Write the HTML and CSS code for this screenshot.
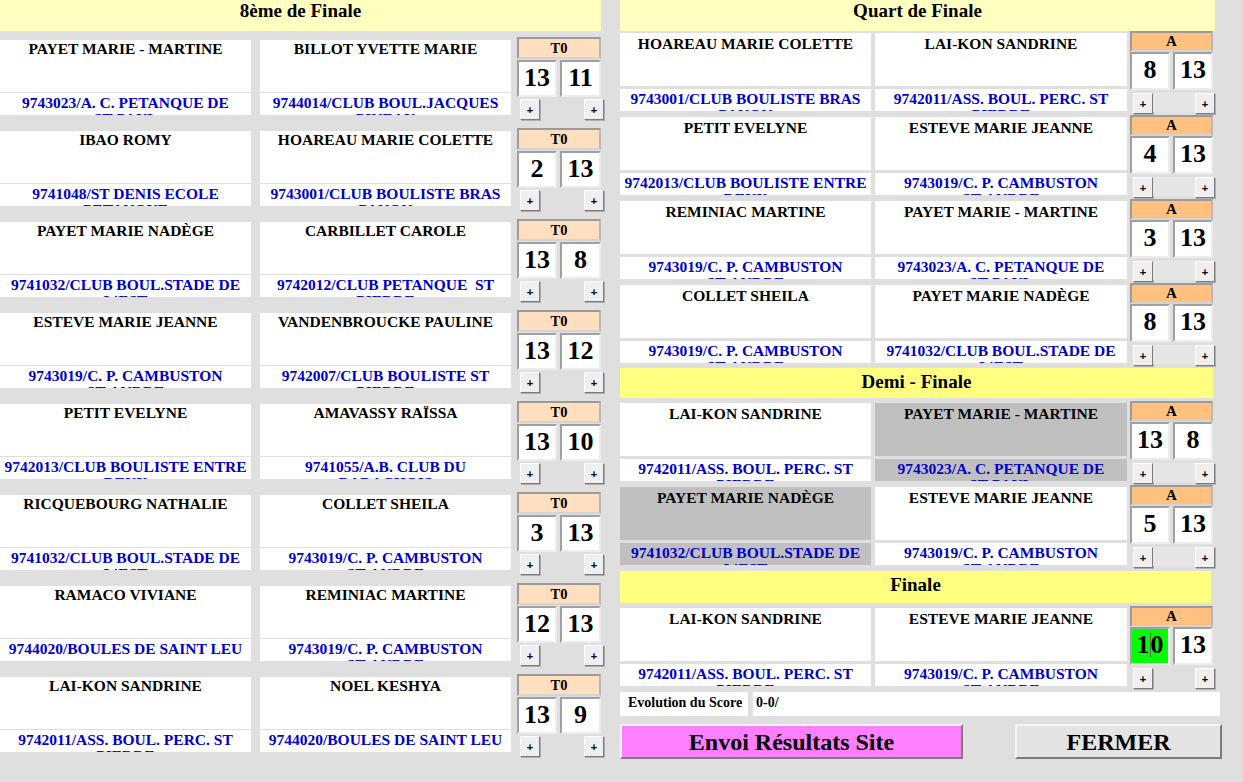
FILE: index.html
```html
<!DOCTYPE html>
<html lang="fr">
<head>
<meta charset="utf-8">
<title>Tableau</title>
<link rel="stylesheet" href="styles.css">
</head>
<body>
<div class="page">
  <div class="col-left">
    <div class="head head-8">8ème de Finale</div>

    <div class="match">
      <div class="player p1"><div class="name">PAYET MARIE - MARTINE</div><div class="club">9743023/A. C. PETANQUE DE ST&nbsp;PAUL</div></div>
      <div class="player p2"><div class="name">BILLOT YVETTE MARIE</div><div class="club">9744014/CLUB BOUL.JACQUES PINEAU</div></div>
      <div class="score"><div class="round">T0</div><div class="cells"><div class="cell">13</div><div class="cell c2">11</div></div><div class="btns"><button class="plus">+</button><button class="plus">+</button></div></div>
    </div>

    <div class="match">
      <div class="player p1"><div class="name">IBAO ROMY</div><div class="club">9741048/ST DENIS ECOLE PETANQUE</div></div>
      <div class="player p2"><div class="name">HOAREAU MARIE COLETTE</div><div class="club">9743001/CLUB BOULISTE BRAS PANON</div></div>
      <div class="score"><div class="round">T0</div><div class="cells"><div class="cell">2</div><div class="cell c2">13</div></div><div class="btns"><button class="plus">+</button><button class="plus">+</button></div></div>
    </div>

    <div class="match">
      <div class="player p1"><div class="name">PAYET MARIE NADÈGE</div><div class="club">9741032/CLUB BOUL.STADE DE L'EST</div></div>
      <div class="player p2"><div class="name">CARBILLET CAROLE</div><div class="club">9742012/CLUB PETANQUE &nbsp;ST PIERRE</div></div>
      <div class="score"><div class="round">T0</div><div class="cells"><div class="cell">13</div><div class="cell c2">8</div></div><div class="btns"><button class="plus">+</button><button class="plus">+</button></div></div>
    </div>

    <div class="match">
      <div class="player p1"><div class="name">ESTEVE MARIE JEANNE</div><div class="club">9743019/C. P. CAMBUSTON ST&nbsp;ANDRE</div></div>
      <div class="player p2"><div class="name">VANDENBROUCKE PAULINE</div><div class="club">9742007/CLUB BOULISTE ST PIERRE</div></div>
      <div class="score"><div class="round">T0</div><div class="cells"><div class="cell">13</div><div class="cell c2">12</div></div><div class="btns"><button class="plus">+</button><button class="plus">+</button></div></div>
    </div>

    <div class="match">
      <div class="player p1"><div class="name">PETIT EVELYNE</div><div class="club">9742013/CLUB BOULISTE ENTRE DEUX</div></div>
      <div class="player p2"><div class="name">AMAVASSY RAÏSSA</div><div class="club">9741055/A.B. CLUB DU BARACHOIS</div></div>
      <div class="score"><div class="round">T0</div><div class="cells"><div class="cell">13</div><div class="cell c2">10</div></div><div class="btns"><button class="plus">+</button><button class="plus">+</button></div></div>
    </div>

    <div class="match">
      <div class="player p1"><div class="name">RICQUEBOURG NATHALIE</div><div class="club">9741032/CLUB BOUL.STADE DE L'EST</div></div>
      <div class="player p2"><div class="name">COLLET SHEILA</div><div class="club">9743019/C. P. CAMBUSTON ST&nbsp;ANDRE</div></div>
      <div class="score"><div class="round">T0</div><div class="cells"><div class="cell">3</div><div class="cell c2">13</div></div><div class="btns"><button class="plus">+</button><button class="plus">+</button></div></div>
    </div>

    <div class="match">
      <div class="player p1"><div class="name">RAMACO VIVIANE</div><div class="club">9744020/BOULES DE SAINT LEU</div></div>
      <div class="player p2"><div class="name">REMINIAC MARTINE</div><div class="club">9743019/C. P. CAMBUSTON ST&nbsp;ANDRE</div></div>
      <div class="score"><div class="round">T0</div><div class="cells"><div class="cell">12</div><div class="cell c2">13</div></div><div class="btns"><button class="plus">+</button><button class="plus">+</button></div></div>
    </div>

    <div class="match">
      <div class="player p1"><div class="name">LAI-KON SANDRINE</div><div class="club">9742011/ASS. BOUL. PERC. ST PIERRE</div></div>
      <div class="player p2"><div class="name">NOEL KESHYA</div><div class="club">9744020/BOULES DE SAINT LEU</div></div>
      <div class="score"><div class="round">T0</div><div class="cells"><div class="cell">13</div><div class="cell c2">9</div></div><div class="btns"><button class="plus">+</button><button class="plus">+</button></div></div>
    </div>
  </div>

  <div class="col-right">
    <div class="head head-q">Quart de Finale</div>

    <div class="match">
      <div class="player p1"><div class="name">HOAREAU MARIE COLETTE</div><div class="club">9743001/CLUB BOULISTE BRAS PANON</div></div>
      <div class="player p2"><div class="name">LAI-KON SANDRINE</div><div class="club">9742011/ASS. BOUL. PERC. ST PIERRE</div></div>
      <div class="score"><div class="round">A</div><div class="cells"><div class="cell">8</div><div class="cell c2">13</div></div><div class="btns"><button class="plus">+</button><span class="strip"></span><button class="plus">+</button></div></div>
    </div>

    <div class="match">
      <div class="player p1"><div class="name">PETIT EVELYNE</div><div class="club">9742013/CLUB BOULISTE ENTRE DEUX</div></div>
      <div class="player p2"><div class="name">ESTEVE MARIE JEANNE</div><div class="club">9743019/C. P. CAMBUSTON ST&nbsp;ANDRE</div></div>
      <div class="score"><div class="round">A</div><div class="cells"><div class="cell">4</div><div class="cell c2">13</div></div><div class="btns"><button class="plus">+</button><span class="strip"></span><button class="plus">+</button></div></div>
    </div>

    <div class="match">
      <div class="player p1"><div class="name">REMINIAC MARTINE</div><div class="club">9743019/C. P. CAMBUSTON ST&nbsp;ANDRE</div></div>
      <div class="player p2"><div class="name">PAYET MARIE - MARTINE</div><div class="club">9743023/A. C. PETANQUE DE ST&nbsp;PAUL</div></div>
      <div class="score"><div class="round">A</div><div class="cells"><div class="cell">3</div><div class="cell c2">13</div></div><div class="btns"><button class="plus">+</button><span class="strip"></span><button class="plus">+</button></div></div>
    </div>

    <div class="match">
      <div class="player p1"><div class="name">COLLET SHEILA</div><div class="club">9743019/C. P. CAMBUSTON ST&nbsp;ANDRE</div></div>
      <div class="player p2"><div class="name">PAYET MARIE NADÈGE</div><div class="club">9741032/CLUB BOUL.STADE DE L'EST</div></div>
      <div class="score"><div class="round">A</div><div class="cells"><div class="cell">8</div><div class="cell c2">13</div></div><div class="btns"><button class="plus">+</button><span class="strip"></span><button class="plus">+</button></div></div>
    </div>

    <div class="head head-d">Demi - Finale</div>

    <div class="match">
      <div class="player p1"><div class="name">LAI-KON SANDRINE</div><div class="club">9742011/ASS. BOUL. PERC. ST PIERRE</div></div>
      <div class="player p2 lost"><div class="name">PAYET MARIE - MARTINE</div><div class="club">9743023/A. C. PETANQUE DE ST&nbsp;PAUL</div></div>
      <div class="score"><div class="round">A</div><div class="cells"><div class="cell">13</div><div class="cell c2">8</div></div><div class="btns"><button class="plus">+</button><span class="strip"></span><button class="plus">+</button></div></div>
    </div>

    <div class="match">
      <div class="player p1 lost"><div class="name">PAYET MARIE NADÈGE</div><div class="club">9741032/CLUB BOUL.STADE DE L'EST</div></div>
      <div class="player p2"><div class="name">ESTEVE MARIE JEANNE</div><div class="club">9743019/C. P. CAMBUSTON ST&nbsp;ANDRE</div></div>
      <div class="score"><div class="round">A</div><div class="cells"><div class="cell">5</div><div class="cell c2">13</div></div><div class="btns"><button class="plus">+</button><span class="strip"></span><button class="plus">+</button></div></div>
    </div>

    <div class="head head-f">Finale</div>

    <div class="match final">
      <div class="player p1"><div class="name">LAI-KON SANDRINE</div><div class="club">9742011/ASS. BOUL. PERC. ST PIERRE</div></div>
      <div class="player p2"><div class="name">ESTEVE MARIE JEANNE</div><div class="club">9743019/C. P. CAMBUSTON ST&nbsp;ANDRE</div></div>
      <div class="score"><div class="round">A</div><div class="cells"><div class="cell green">1<span class="caret"></span>0</div><div class="cell c2">13</div></div><div class="btns"><button class="plus">+</button><button class="plus">+</button></div></div>
    </div>

    <div class="evo">
      <div class="evo-label">Evolution du Score</div>
      <div class="evo-value">0-0/</div>
    </div>

    <div class="actions">
      <button class="btn btn-send">Envoi Résultats Site</button>
      <button class="btn btn-close">FERMER</button>
    </div>
  </div>
</div>
</body>
</html>
```

FILE: styles.css
```css
html, body {
  margin: 0;
  padding: 0;
}
body {
  background: #dfdfdf;
  font-family: "Liberation Serif", "Times New Roman", serif;
  color: #000;
  width: 1243px;
  height: 782px;
  overflow: hidden;
}
.page {
  display: flex;
  align-items: flex-start;
}
.col-left {
  width: 604px;
}
.col-right {
  width: 604px;
  margin-left: 16px;
}

/* section headers */
.head {
  font-weight: bold;
  font-size: 19px;
  text-align: center;
  box-sizing: border-box;
}
.head-8 {
  width: 601px;
  height: 31px;
  line-height: 22px;
  background: #ffffc0;
  margin-bottom: 6px;
}
.head-q {
  width: 595px;
  height: 31px;
  line-height: 22px;
  background: #ffffc0;
  margin-bottom: 1px;
}
.head-d {
  width: 593px;
  height: 30px;
  line-height: 27px;
  background: #ffff80;
  margin-bottom: 4px;
}
.head-f {
  width: 591px;
  height: 32px;
  line-height: 27px;
  background: #ffff80;
  margin-top: 1px;
  margin-bottom: 4px;
}

/* match rows */
.match {
  display: flex;
  align-items: flex-start;
}
.col-left .match {
  height: 91px;
}
.col-right .match {
  height: 84px;
}
.player {
  width: 251px;
  display: flex;
  flex-direction: column;
}
.col-left .player {
  margin-top: 3px;
}
.col-left .p1 { margin-right: 9px; }
.col-left .p2 { margin-right: 6px; }
.col-right .player {
  margin-top: 1px;
}
.col-right .p1 { margin-right: 4px; }
.col-right .p2 { width: 252px; margin-right: 3px; }

.name, .club {
  background: #fff;
  text-align: center;
  font-weight: bold;
  font-size: 15.5px;
  line-height: 16px;
  box-sizing: border-box;
  overflow: hidden;
}
.name {
  height: 52px;
  padding-top: 1px;
}
.club {
  color: #0000cc;
  height: 22px;
  margin-top: 1px;
  padding-top: 1.5px;
  line-height: 16px;
}
.col-right .name {
  height: 53px;
  padding-top: 3px;
}
.col-right .club {
  height: 22px;
  margin-top: 3px;
  padding-top: 1.5px;
}
.lost .name, .lost .club {
  background: #c0c0c0;
}

/* score block */
.score {
  width: 87px;
}
.col-right .score {
  width: 85px;
}
.round {
  width: 84px;
  height: 22px;
  box-sizing: border-box;
  border: 2px solid;
  border-color: #9a9a9a #b8b8b8 #d4d4d4 #9a9a9a;
  background: #ffdfbf;
  font-weight: bold;
  font-size: 14.5px;
  line-height: 18px;
  text-align: center;
}
.col-right .round {
  width: 83px;
  height: 21px;
  line-height: 17px;
  font-size: 15px;
  background: #ffc080;
  margin-top: -1px;
}
.cells {
  display: flex;
  justify-content: space-between;
  width: 84px;
  margin-top: 1px;
}
.col-right .cells {
  width: 83px;
  margin-top: 0;
}
.cell {
  width: 40px;
  height: 37px;
  box-sizing: border-box;
  border: 2px solid;
  border-color: #a0a0a0 #ececec #ececec #a0a0a0;
  background: #fff;
  font-weight: bold;
  font-size: 26px;
  line-height: 31px;
  text-align: center;
}
.cell.c2 {
  width: 41px;
}
.col-right .cell {
  height: 38px;
  width: 40px;
  line-height: 32px;
}
.cell.green {
  background: #00ff00;
}
.caret {
  display: inline-block;
  width: 1px;
  height: 24px;
  background: #666;
  vertical-align: -4px;
}
.btns {
  display: flex;
  justify-content: space-between;
  align-items: flex-start;
  margin-top: 2px;
  padding-left: 3px;
}
.col-right .btns {
  margin-top: 3px;
}
.strip {
  flex: 1;
  height: 19px;
  background: #e6e6e6;
}
.plus {
  -webkit-appearance: none;
  appearance: none;
  width: 20px;
  height: 21px;
  margin: 0;
  padding: 0;
  box-sizing: border-box;
  background: #efefef;
  border: 1px solid;
  border-color: #ffffff #7a7a7a #7a7a7a #ffffff;
  box-shadow: 1px 1px 0 #b0b0b0;
  font-family: "Liberation Sans", Arial, sans-serif;
  font-size: 11px;
  font-weight: bold;
  line-height: 18px;
  color: #000;
  text-align: center;
}

/* score evolution */
.evo {
  display: flex;
  margin-top: 1px;
  height: 24px;
}
.evo-label {
  width: 128px;
  background: #fff;
  font-weight: bold;
  font-size: 14px;
  line-height: 21px;
  padding-left: 8px;
  box-sizing: border-box;
  margin-right: 5px;
  white-space: nowrap;
}
.evo-value {
  width: 467px;
  background: #fff;
  font-weight: bold;
  font-size: 14px;
  line-height: 21px;
  padding-left: 3px;
  box-sizing: border-box;
}

/* action buttons */
.actions {
  display: flex;
  justify-content: space-between;
  width: 602px;
  margin-top: 8px;
}
.btn {
  -webkit-appearance: none;
  appearance: none;
  height: 35px;
  margin: 0;
  padding: 0;
  box-sizing: border-box;
  border: 2px solid;
  border-color: #f4f4f4 #7c7c7c #7c7c7c #f4f4f4;
  font-family: "Liberation Serif", "Times New Roman", serif;
  font-weight: bold;
  font-size: 24px;
  line-height: 30px;
  color: #000;
  text-align: center;
}
.btn-send {
  width: 343px;
  background: #ff80ff;
}
.btn-close {
  width: 207px;
  background: #e4e4e4;
}
```
